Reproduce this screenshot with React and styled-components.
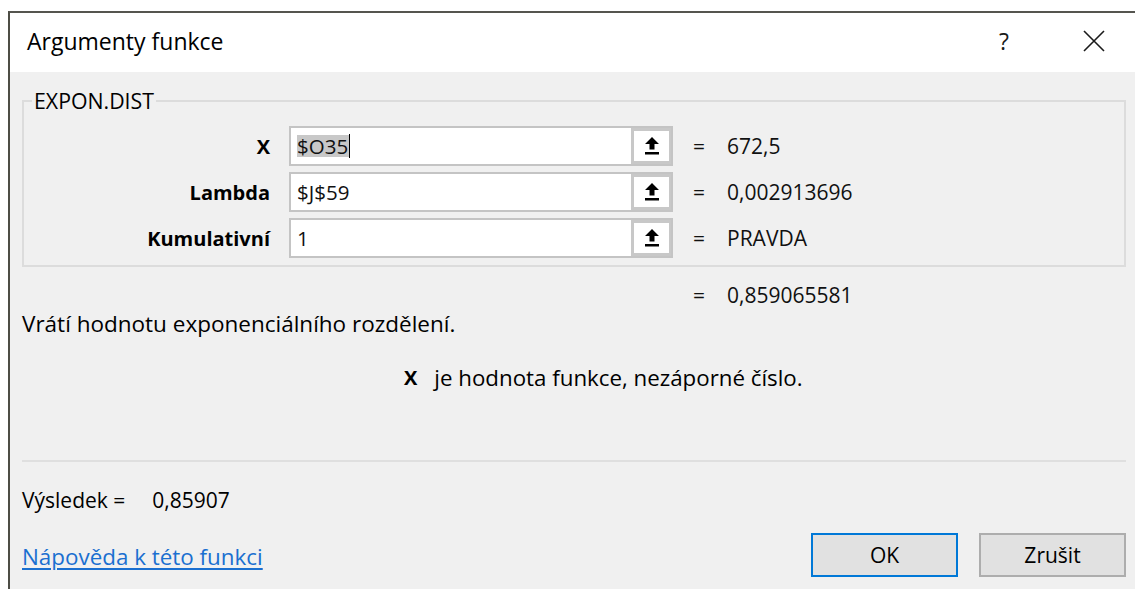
import styled, { createGlobalStyle } from "styled-components";

const GlobalStyle = createGlobalStyle`
  html, body {
    margin: 0;
    padding: 0;
    background: #ffffff;
  }
  body {
    font-family: "Open Sans", "Noto Sans", "Liberation Sans", sans-serif;
    font-size: 21px;
    color: #000;
    overflow: hidden;
  }
`;

// sloupce řádků s argumenty: popisek | vstup | rovnítko + hodnota
const COLUMNS = "246px 384px auto";

const Window = styled.div`
  margin: 11px 0 0 8px;
  height: 578px;
  border-top: 2px solid #55554f;
  border-left: 2px solid #4d4d45;
  background: #f0f0f0;
  display: flex;
  flex-direction: column;
`;

const TitleBar = styled.div`
  height: 59px;
  background: #fff;
  display: flex;
  align-items: center;
  padding: 0 30px 0 17px;
`;

const Title = styled.div`
  flex: 1;
  font-size: 23px;
  color: #000;
  margin-top: -3px;
`;

const HelpMark = styled.div`
  font-size: 23px;
  color: #1a1a1a;
  margin: -4px 74px 0 0;
`;

const Close = styled.div`
  display: flex;
  margin-top: -4px;
`;

const Body = styled.div`
  flex: 1;
  padding: 19px 9px 0 12px;
  display: flex;
  flex-direction: column;
`;

const Group = styled.fieldset`
  margin: 0;
  padding: 0 0 7px 0;
  border: 2px solid #dcdcdc;
  min-width: 0;
`;

const Legend = styled.legend`
  margin-left: 8px;
  padding: 0 2px;
  line-height: 20px;
  font-size: 21.3px;
`;

const ArgRows = styled.div`
  display: grid;
  grid-template-columns: ${COLUMNS};
  column-gap: 19px;
  row-gap: 6px;
  padding-top: 15px;
`;

const ArgLabel = styled.div`
  font-weight: 700;
  font-size: 20px;
  text-align: right;
  align-self: center;
`;

const Field = styled.div`
  display: flex;
  height: 40px;
  box-sizing: border-box;
  border: 2px solid #c4c4c4;
  background: #fff;
`;

const FieldText = styled.div`
  flex: 1;
  display: flex;
  align-items: center;
  padding-left: 6px;
  font-size: 20.5px;
  color: #111;
`;

const Selected = styled.span`
  background: #c8c8c8;
  line-height: 22px;
  padding-right: 1px;
`;

const Caret = styled.span`
  display: inline-block;
  width: 1px;
  height: 24px;
  background: #000;
`;

const CollapseButton = styled.div`
  width: 40px;
  box-sizing: border-box;
  border: 3px solid #c8c8c8;
  border-right-width: 2px;
  background: #fff;
  display: flex;
  align-items: center;
  justify-content: center;
`;

const Value = styled.div`
  display: flex;
  align-items: center;
  gap: 22px;
  padding-left: 1px;
  color: #111;
`;

const ResultRow = styled.div`
  display: grid;
  grid-template-columns: ${COLUMNS};
  column-gap: 19px;
  height: 30px;
  margin-top: 13px;
  padding-left: 2px;
`;

const Description = styled.div`
  font-size: 22.5px;
  line-height: 24px;
  margin-top: 2px;
`;

const Hint = styled.div`
  line-height: 24px;
  margin-top: 30px;
  padding-left: 382px;
  display: flex;
  gap: 17px;
  font-size: 22.3px;
`;

const Bold = styled.b`
  font-weight: 700;
  font-size: 20px;
`;

const Separator = styled.div`
  height: 2px;
  background: #dfdfdf;
  margin-top: 70px;
`;

const Result = styled.div`
  display: flex;
  gap: 27px;
  line-height: 24px;
  margin-top: 26px;
`;

const Footer = styled.div`
  display: flex;
  align-items: center;
  margin-top: 21px;
`;

const HelpLink = styled.a`
  flex: 1;
  font-size: 22.4px;
  color: #1a6fd0;
  text-decoration: underline;
  text-underline-offset: 3px;
  cursor: pointer;
  margin-top: 3px;
`;

const Button = styled.button`
  width: 147px;
  height: 44px;
  margin-left: ${(p) => p.ml || 0}px;
  font-family: inherit;
  font-size: 21px;
  color: #000;
  background: #e1e1e1;
  border: 2px solid ${(p) => (p.primary ? "#0078d7" : "#adadad")};
  padding: 0;
`;

function UpArrow() {
  return (
    <svg width="18" height="20" viewBox="0 0 18 20">
      <path d="M9 1 L2 8 H6.5 V13.5 H11.5 V8 H16 Z" fill="#000" />
      <rect x="2" y="16" width="14" height="2.5" fill="#000" />
    </svg>
  );
}

function CloseIcon() {
  return (
    <svg width="22" height="22" viewBox="0 0 22 22">
      <path d="M1 1 L21 21 M21 1 L1 21" stroke="#1a1a1a" strokeWidth="1.6" />
    </svg>
  );
}

const args = [
  { name: "X", value: "$O35", result: "672,5", active: true },
  { name: "Lambda", value: "$J$59", result: "0,002913696" },
  { name: "Kumulativní", value: "1", result: "PRAVDA" },
];

export default function App() {
  return (
    <>
      <GlobalStyle />
      <Window>
        <TitleBar>
          <Title>Argumenty funkce</Title>
          <HelpMark>?</HelpMark>
          <Close>
            <CloseIcon />
          </Close>
        </TitleBar>
        <Body>
          <Group>
            <Legend>EXPON.DIST</Legend>
            <ArgRows>
              {args.map((a) => [
                <ArgLabel key={a.name + "l"}>{a.name}</ArgLabel>,
                <Field key={a.name + "f"}>
                  <FieldText>
                    {a.active ? (
                      <>
                        <Selected>{a.value}</Selected>
                        <Caret />
                      </>
                    ) : (
                      a.value
                    )}
                  </FieldText>
                  <CollapseButton>
                    <UpArrow />
                  </CollapseButton>
                </Field>,
                <Value key={a.name + "v"}>
                  <span>=</span>
                  <span>{a.result}</span>
                </Value>,
              ])}
            </ArgRows>
          </Group>
          <ResultRow>
            <div />
            <div />
            <Value>
              <span>=</span>
              <span>0,859065581</span>
            </Value>
          </ResultRow>
          <Description>Vrátí hodnotu exponenciálního rozdělení.</Description>
          <Hint>
            <Bold>X</Bold>
            <span>je hodnota funkce, nezáporné číslo.</span>
          </Hint>
          <Separator />
          <Result>
            <span>Výsledek =</span>
            <span>0,85907</span>
          </Result>
          <Footer>
            <HelpLink>Nápověda k této funkci</HelpLink>
            <Button primary>OK</Button>
            <Button ml={21}>Zrušit</Button>
          </Footer>
        </Body>
      </Window>
    </>
  );
}
